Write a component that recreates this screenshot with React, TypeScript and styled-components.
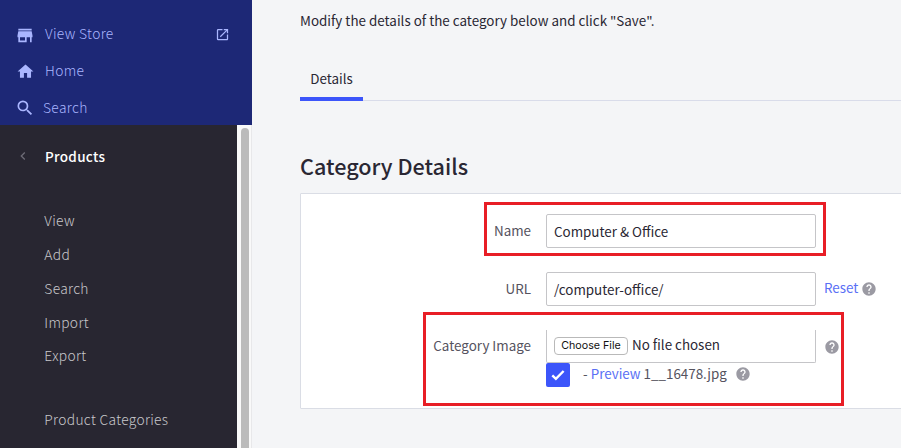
import React from "react";
import styled, { createGlobalStyle, css } from "styled-components";
import { MdStore, MdHome, MdSearch, MdOpenInNew, MdHelp, MdChevronLeft } from "react-icons/md";

const GlobalStyle = createGlobalStyle`
  * { box-sizing: border-box; }
  body {
    margin: 0;
    overflow: hidden;
    background: #f4f5f7;
    color: #2a2733;
    font-family: "Noto Sans CJK SC", "Open Sans", sans-serif;
    font-size: 13.4px;
  }
`;

const Page = styled.div`
  display: flex;
  height: 448px;
  overflow: hidden;
`;

const Sidebar = styled.aside`
  flex: 0 0 252px;
  display: flex;
  flex-direction: column;
  font-size: 13.8px;
`;

const TopNav = styled.nav`
  flex: 0 0 125px;
  padding: 16px 0 0 15px;
  background: #1d2876;
  color: #aab6ff;
`;

const TopItem = styled.a<{ $gap: number; $height: number }>`
  display: flex;
  align-items: center;
  height: ${(p) => p.$height}px;
  gap: ${(p) => p.$gap}px;
  font-weight: 300;
  letter-spacing: 0.35px;
  padding-right: 22px;
`;

const IconSlot = styled.span`
  display: flex;
  justify-content: center;
  width: 20px;
  padding-top: 2px;
`;

const TopLabel = styled.span<{ $raised?: boolean }>`
  flex: 1;
  padding-bottom: ${(p) => (p.$raised ? 2 : 1)}px;
`;

const Scroller = styled.div`
  flex: 1;
  display: flex;
`;

const SubNav = styled.nav`
  flex: 0 0 237px;
  background: #282631;
  color: #c8c8cc;
`;

const SubTitle = styled.div`
  display: flex;
  align-items: center;
  height: 24px;
  margin: 19px 0 40px 15px;
  gap: 14px;
  color: #fff;
  font-size: 13.5px;
  font-weight: 500;
  letter-spacing: 0.3px;

  svg { color: #6d6c76; }
`;

const SubLink = styled.a<{ $separated?: boolean }>`
  display: block;
  height: 33.85px;
  line-height: 24px;
  padding-left: 44.3px;
  font-weight: 300;
  letter-spacing: 0.33px;
  ${(p) => p.$separated && css`margin-top: 29.75px;`}
`;

const ScrollTrack = styled.div`
  flex: 0 0 15px;
  padding: 3px 2px 0 4px;
  background: #f9f9f9;
  border-right: 1px solid #e8e8ea;
`;

const ScrollThumb = styled.div`
  height: 100%;
  border-radius: 4px 4px 0 0;
  background: #bbb;
`;

const Main = styled.main`
  flex: 1;
  min-width: 0;
  padding: 8px 0 0 48px;
`;

const Intro = styled.p`
  margin: 0;
  height: 49px;
  line-height: 24px;
  letter-spacing: 0.01px;
`;

const Tabs = styled.div`
  display: flex;
  height: 44px;
  border-bottom: 1px solid #d9dcea;
`;

const Tab = styled.div`
  height: 44px;
  width: 63px;
  padding-top: 9px;
  text-align: center;
  line-height: 24px;
  border-bottom: 4px solid #3c55fa;
`;

const Heading = styled.h2`
  margin: 49px 0 12px;
  font-size: 21.6px;
  line-height: 31px;
  font-weight: 500;
`;

const Card = styled.section`
  position: relative;
  width: 620px;
  height: 216px;
  padding-top: 20px;
  background: #fff;
  border: 1px solid #dadde5;
  border-radius: 1px;
`;

const Field = styled.div<{ $height: number }>`
  display: grid;
  grid-template-columns: 230px 270px auto;
  column-gap: 15px;
  height: ${(p) => p.$height}px;
`;

const Label = styled.label<{ $raised?: boolean }>`
  height: 34px;
  line-height: ${(p) => (p.$raised ? 31 : 33)}px;
  text-align: right;
  color: #55535e;
`;

const Control = styled.div<{ $open?: boolean }>`
  display: flex;
  align-items: center;
  height: 34px;
  padding: 0 7px;
  border: 1px solid #c5c5c8;
  border-radius: 2px;
  ${(p) => p.$open && css`
    height: 33px;
    border-top: 0;
    border-radius: 0 0 2px 2px;
  `}
`;

const Aside = styled.div`
  display: flex;
  align-items: center;
  height: 33px;
  margin-left: -7px;
  gap: 3px;
`;

const Link = styled.a`
  color: #5a70f5;
`;

const ResetLink = styled(Link)`
  padding-bottom: 3px;
`;

const Help = styled(MdHelp)`
  width: 16px;
  height: 16px;
  color: #9b9aa3;
`;

const FileButton = styled.button`
  width: 74px;
  height: 18px;
  margin-right: 4px;
  padding: 0;
  border: 1px solid #b9b9b9;
  border-radius: 4px;
  background: #fff;
  color: #111;
  font: 10.7px/16px Inter, "Liberation Sans", sans-serif;
`;

const FileStatus = styled.span`
  padding-bottom: 4px;
`;

const Upload = styled.div`
  display: flex;
  align-items: center;
  height: 24px;
  color: #55535e;
`;

const Checkbox = styled.span`
  display: flex;
  align-items: center;
  justify-content: center;
  width: 24px;
  height: 24px;
  margin-right: 13px;
  border-radius: 2px;
  background: #3c55fa;
`;

const Filename = styled.span`
  white-space: pre;
  margin-right: 8px;
  margin-top: -5px;
`;

const UploadHelp = styled(Help)`
  margin-top: -2px;
`;

const Highlight = styled.div<{ $x: number; $y: number; $w: number; $h: number }>`
  position: absolute;
  left: ${(p) => p.$x}px;
  top: ${(p) => p.$y}px;
  width: ${(p) => p.$w}px;
  height: ${(p) => p.$h}px;
  border: 3px solid #e81e26;
  pointer-events: none;
`;

const Tick = () => (
  <svg width="14" height="12" viewBox="0 0 14 12" fill="none" stroke="#fff" strokeWidth="2.4">
    <path d="M1.3 6.3 4.9 9.8 12.6 2" />
  </svg>
);

export default function App() {
  return (
    <Page>
      <GlobalStyle />
      <Sidebar>
        <TopNav>
          <TopItem $gap={10} $height={36}>
            <IconSlot><MdStore size={21} /></IconSlot>
            <TopLabel $raised>View Store</TopLabel>
            <MdOpenInNew size={15} />
          </TopItem>
          <TopItem $gap={10} $height={37}>
            <IconSlot><MdHome size={19} /></IconSlot>
            <TopLabel $raised>Home</TopLabel>
          </TopItem>
          <TopItem $gap={8} $height={36}>
            <IconSlot><MdSearch size={20} /></IconSlot>
            <TopLabel>Search</TopLabel>
          </TopItem>
        </TopNav>
        <Scroller>
          <SubNav>
            <SubTitle><MdChevronLeft size={16} />Products</SubTitle>
            <SubLink>View</SubLink>
            <SubLink>Add</SubLink>
            <SubLink>Search</SubLink>
            <SubLink>Import</SubLink>
            <SubLink>Export</SubLink>
            <SubLink $separated>Product Categories</SubLink>
          </SubNav>
          <ScrollTrack><ScrollThumb /></ScrollTrack>
        </Scroller>
      </Sidebar>
      <Main>
        <Intro>Modify the details of the category below and click "Save".</Intro>
        <Tabs><Tab>Details</Tab></Tabs>
        <Heading>Category Details</Heading>
        <Card>
          <Field $height={58}>
            <Label>Name</Label>
            <Control>Computer &amp; Office</Control>
          </Field>
          <Field $height={58}>
            <Label>URL</Label>
            <Control>/computer-office/</Control>
            <Aside><ResetLink>Reset</ResetLink><Help /></Aside>
          </Field>
          <Field $height={80}>
            <Label $raised>Category Image</Label>
            <div>
              <Control $open>
                <FileButton>Choose File</FileButton>
                <FileStatus>No file chosen</FileStatus>
              </Control>
              <Upload>
                <Checkbox><Tick /></Checkbox>
                <Filename>- <Link>Preview</Link> 1__16478.jpg</Filename>
                <UploadHelp />
              </Upload>
            </div>
            <Aside><Help /></Aside>
          </Field>
          <Highlight $x={183} $y={8} $w={342} $h={54} />
          <Highlight $x={122} $y={118} $w={421} $h={94} />
        </Card>
      </Main>
    </Page>
  );
}
